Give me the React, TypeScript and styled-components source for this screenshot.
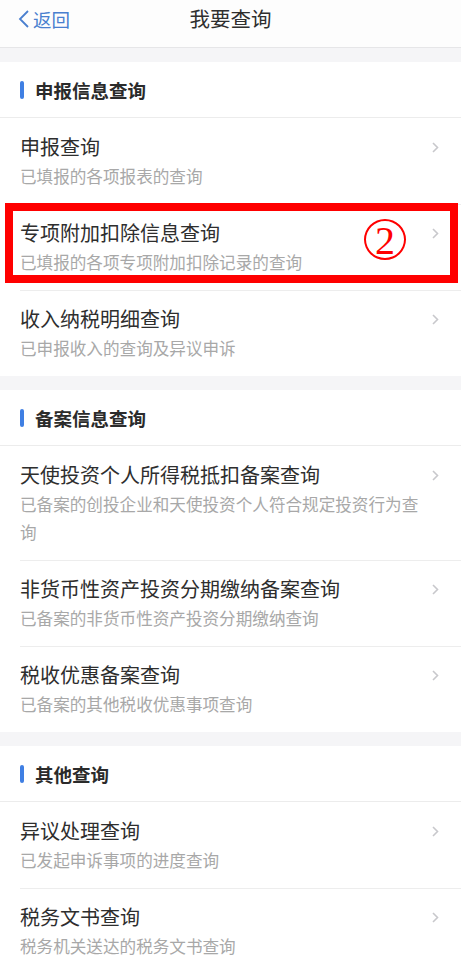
import React from 'react';
import styled, { createGlobalStyle } from 'styled-components';

const GlobalStyle = createGlobalStyle`
  html, body {
    margin: 0;
    padding: 0;
    background: #f5f5f7;
    font-family: "Noto Sans CJK SC", "Noto Sans", sans-serif;
  }
`;

const Page = styled.div`
  width: 461px;
  min-height: 960px;
  background: #f5f5f7;
  overflow: hidden;
`;

const NavBar = styled.div`
  height: 47px;
  background: #fdfdfd;
  border-bottom: 1px solid #e6e6e8;
  display: grid;
  grid-template-columns: 1fr auto 1fr;
  align-items: start;
`;

const Back = styled.div`
  display: flex;
  align-items: center;
  gap: 3px;
  padding: 6px 0 0 17px;
  color: #4a7fcf;
  font-size: 18.5px;
  line-height: 26px;
`;

const NavTitle = styled.div`
  padding-top: 4px;
  font-size: 20.5px;
  line-height: 28px;
  color: #2f2f2f;
`;

const Section = styled.section`
  margin-top: 14px;
  background: #fff;
`;

const SectionHead = styled.div`
  height: 55px;
  display: flex;
  align-items: center;
  gap: 11px;
  padding-left: 20px;
  border-bottom: 1px solid #ececec;
  font-size: 18.5px;
  font-weight: 700;
  color: #2b2b2b;
`;

const Bar = styled.span`
  width: 4px;
  height: 18px;
  border-radius: 2px;
  background: #3f7fe3;
`;

const Item = styled.div`
  position: relative;
  display: flex;
  align-items: flex-start;
  padding: 14px 22px 14px 20px;
  & + &::before {
    content: '';
    position: absolute;
    left: 20px;
    right: 0;
    top: 0;
    height: 1px;
    background: #ededed;
  }
`;

const Texts = styled.div`
  flex: 1;
`;

const Title = styled.div`
  font-size: 20px;
  line-height: 30px;
  color: #2e2e2e;
`;

const Sub = styled.div`
  font-size: 16.6px;
  line-height: 28px;
  color: #a8a8a8;
`;

const Chevron = styled.svg`
  flex: none;
  margin-top: 10px;
`;

const Mark = styled.div`
  position: absolute;
  left: 5px;
  right: 3px;
  top: -1px;
  bottom: 7px;
  border: 8px solid #f00;
  pointer-events: none;
`;

const Circled = styled.span`
  position: absolute;
  left: 364px;
  top: 15px;
  width: 42px;
  height: 41px;
  border: 2px solid #f00;
  border-radius: 50%;
  display: flex;
  align-items: center;
  justify-content: center;
  color: #f00;
  font-family: "Liberation Serif", serif;
  font-size: 40px;
  line-height: 1;
  padding-top: 3px;
  box-sizing: border-box;
`;

type Entry = { title: string; sub: string; marked?: boolean };

const sections: { name: string; items: Entry[] }[] = [
  {
    name: '申报信息查询',
    items: [
      { title: '申报查询', sub: '已填报的各项报表的查询' },
      { title: '专项附加扣除信息查询', sub: '已填报的各项专项附加扣除记录的查询', marked: true },
      { title: '收入纳税明细查询', sub: '已申报收入的查询及异议申诉' },
    ],
  },
  {
    name: '备案信息查询',
    items: [
      { title: '天使投资个人所得税抵扣备案查询', sub: '已备案的创投企业和天使投资个人符合规定投资行为查询' },
      { title: '非货币性资产投资分期缴纳备案查询', sub: '已备案的非货币性资产投资分期缴纳查询' },
      { title: '税收优惠备案查询', sub: '已备案的其他税收优惠事项查询' },
    ],
  },
  {
    name: '其他查询',
    items: [
      { title: '异议处理查询', sub: '已发起申诉事项的进度查询' },
      { title: '税务文书查询', sub: '税务机关送达的税务文书查询' },
    ],
  },
];

const Arrow = () => (
  <Chevron width="7" height="11" viewBox="0 0 7 11">
    <path d="M1 1l4.5 4.5L1 10" fill="none" stroke="#c8c8cc" strokeWidth="1.6" />
  </Chevron>
);

const App = () => (
  <Page>
    <GlobalStyle />
    <NavBar>
      <Back>
        <svg width="13" height="20" viewBox="0 0 13 20">
          <path d="M11 2L3 10l8 8" fill="none" stroke="#4a7fcf" strokeWidth="1.8" />
        </svg>
        返回
      </Back>
      <NavTitle>我要查询</NavTitle>
    </NavBar>
    {sections.map((s) => (
      <Section key={s.name}>
        <SectionHead>
          <Bar />
          {s.name}
        </SectionHead>
        {s.items.map((it) => (
          <Item key={it.title}>
            <Texts>
              <Title>{it.title}</Title>
              <Sub>{it.sub}</Sub>
            </Texts>
            <Arrow />
            {it.marked && (
              <>
                <Mark />
                <Circled>2</Circled>
              </>
            )}
          </Item>
        ))}
      </Section>
    ))}
  </Page>
);

export default App;
